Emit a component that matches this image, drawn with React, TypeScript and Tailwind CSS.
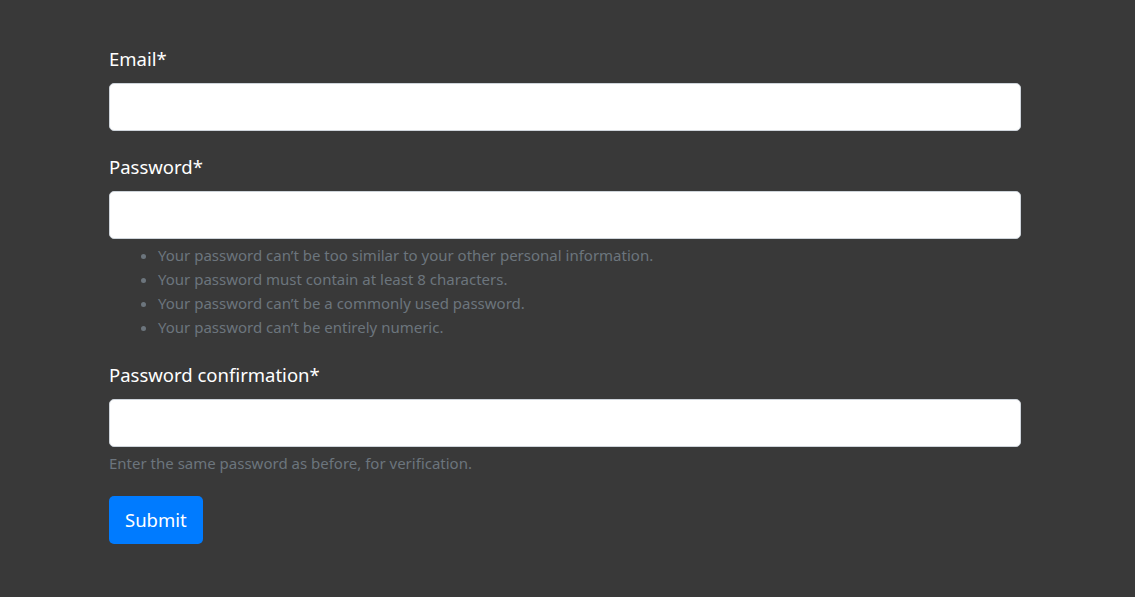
import React from 'react';

const hints = [
  "Your password can\u2019t be too similar to your other personal information.",
  'Your password must contain at least 8 characters.',
  "Your password can\u2019t be a commonly used password.",
  "Your password can\u2019t be entirely numeric.",
];

const Field: React.FC<{ label: string; type: string; className?: string; children?: React.ReactNode }> = ({
  label,
  type,
  className = 'mb-[22px]',
  children,
}) => (
  <div className={className}>
    <label className="block text-[18.5px] leading-[28px] text-white mb-[10px]">{label}</label>
    <input
      type={type}
      className="block w-full h-[48px] bg-white border border-[#ced4da] rounded-[5px] px-4 text-[20px] text-[#495057] outline-none"
    />
    {children}
  </div>
);

export default function App() {
  return (
    <div
      className="min-h-[597px] w-full bg-[#393939] pt-[45px]"
      style={{ fontFamily: '"Noto Sans", "Open Sans", sans-serif' }}
    >
      <form className="ml-[109px] w-[912px]" onSubmit={(e) => e.preventDefault()}>
        <Field label="Email*" type="email" />
        <Field label="Password*" type="password">
          <ul className="mt-1 pl-[49px] list-disc text-[15px] leading-[24px] text-[#6c757d]">
            {hints.map((h) => (
              <li key={h}>{h}</li>
            ))}
          </ul>
        </Field>
        <Field label="Password confirmation*" type="password" className="mb-[21px]">
          <small className="block mt-1 text-[15px] leading-[24px] text-[#6c757d]">
            Enter the same password as before, for verification.
          </small>
        </Field>
        <button
          type="submit"
          className="block h-[48px] px-4 bg-[#007bff] text-white text-[18.5px] rounded-[5px]"
        >
          Submit
        </button>
      </form>
    </div>
  );
}
